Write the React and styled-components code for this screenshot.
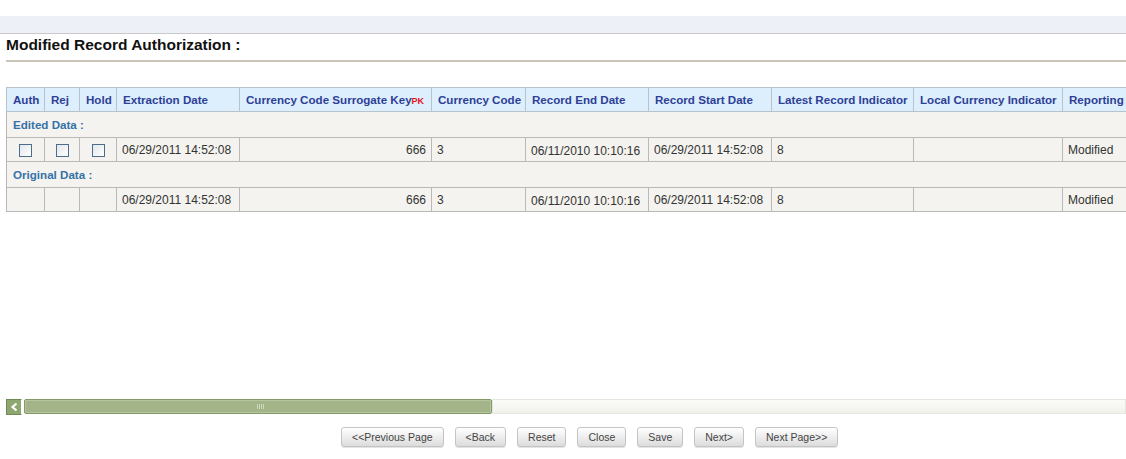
import React from 'react';
import styled, { createGlobalStyle } from 'styled-components';

const GlobalStyle = createGlobalStyle`
  html, body {
    margin: 0;
    padding: 0;
    background: #fff;
    font-family: "Liberation Sans", Arial, sans-serif;
  }
`;

const columns = [
  { title: 'Auth', width: 38 },
  { title: 'Rej', width: 35 },
  { title: 'Hold', width: 37 },
  { title: 'Extraction Date', width: 123 },
  { title: 'Currency Code Surrogate Key', width: 192, pk: true },
  { title: 'Currency Code', width: 94 },
  { title: 'Record End Date', width: 123 },
  { title: 'Record Start Date', width: 123 },
  { title: 'Latest Record Indicator', width: 142 },
  { title: 'Local Currency Indicator', width: 149 },
  { title: 'Reporting Currency Indicator', width: 170 },
];

const record = {
  extraction: '06/29/2011 14:52:08',
  surrogate: '666',
  code: '3',
  endDate: '06/11/2010 10:10:16',
  startDate: '06/29/2011 14:52:08',
  latest: '8',
  local: '',
  reporting: 'Modified',
};

const buttons = ['<<Previous Page', '<Back', 'Reset', 'Close', 'Save', 'Next>', 'Next Page>>'];

const DataRow = ({ editable }) => (
  <tr>
    {[0, 1, 2].map((i) => (
      <CheckCell key={i}>{editable && <Check />}</CheckCell>
    ))}
    <Cell>{record.extraction}</Cell>
    <Cell $align="right">{record.surrogate}</Cell>
    <Cell>{record.code}</Cell>
    <Cell $drop>{record.endDate}</Cell>
    <Cell>{record.startDate}</Cell>
    <Cell>{record.latest}</Cell>
    <Cell>{record.local}</Cell>
    <Cell>{record.reporting}</Cell>
  </tr>
);

const App = () => {
  return (
    <>
      <GlobalStyle />
      <Page>
        <TopBand />
        <Title>Modified Record Authorization :</Title>
        <Rule />
        <TableViewport>
          <Grid>
            <colgroup>
              {columns.map((c) => (
                <col key={c.title} style={{ width: c.width }} />
              ))}
            </colgroup>
            <thead>
              <tr>
                {columns.map((c) => (
                  <HeadCell key={c.title}>
                    {c.title}
                    {c.pk && <Pk>PK</Pk>}
                  </HeadCell>
                ))}
              </tr>
            </thead>
            <tbody>
              <tr>
                <GroupCell colSpan={columns.length}>Edited Data :</GroupCell>
              </tr>
              <DataRow editable />
              <tr>
                <GroupCell colSpan={columns.length}>Original Data :</GroupCell>
              </tr>
              <DataRow />
            </tbody>
          </Grid>
        </TableViewport>
        <ScrollBar>
          <ArrowButton>
            <svg width="9" height="10" viewBox="0 0 9 10">
              <path d="M6.5 1.5 L2.5 5 L6.5 8.5" fill="none" stroke="#fff" strokeWidth="2.2" />
            </svg>
          </ArrowButton>
          <Thumb>
            <Grip />
          </Thumb>
          <Track />
        </ScrollBar>
        <ButtonBar>
          {buttons.map((b) => (
            <ActionButton key={b}>{b}</ActionButton>
          ))}
        </ButtonBar>
      </Page>
    </>
  );
};

export default App;

const Page = styled.div`
  width: 1126px;
  height: 459px;
  overflow: hidden;
`;

const TopBand = styled.div`
  margin-top: 16px;
  height: 17px;
  background: #eef0f8;
  border-bottom: 1px solid #c9c9c9;
`;

const Title = styled.h2`
  margin: 0;
  padding: 2px 6px 0;
  height: 24px;
  font-size: 15.5px;
  font-weight: bold;
  color: #111;
  line-height: 18px;
`;

const Rule = styled.div`
  margin-left: 6px;
  height: 2px;
  background: #cbc5b7;
`;

const TableViewport = styled.div`
  margin-top: 25px;
  height: 312px;
  padding-left: 6px;
  overflow: hidden;
`;

const Grid = styled.table`
  border-collapse: collapse;
  table-layout: fixed;
  width: 1216px;
  font-size: 12px;
`;

const HeadCell = styled.th`
  height: 23px;
  padding: 0 6px;
  background: #ddeefc;
  border: 1px solid #b9c3cc;
  color: #2e3f96;
  font-size: 11.6px;
  font-weight: bold;
  text-align: left;
  white-space: nowrap;
  overflow: hidden;
`;

const Pk = styled.span`
  color: #e8141c;
  font-size: 9px;
  font-weight: bold;
`;

const GroupCell = styled.td`
  height: 25px;
  padding: 0 6px;
  background: #f4f3ef;
  border: 1px solid #b9b9b9;
  color: #3572a8;
  font-size: 11.6px;
  font-weight: bold;
  text-align: left;
`;

const Cell = styled.td`
  height: 24px;
  padding: ${(p) => (p.$drop ? '2px 5px 0' : '0 5px')};
  box-sizing: border-box;
  background: #f4f3ef;
  border: 1px solid #b9b9b9;
  color: #333;
  text-align: ${(p) => p.$align || 'left'};
  white-space: nowrap;
  overflow: hidden;
`;

const CheckCell = styled(Cell)`
  text-align: center;
  padding: 0;
`;

const Check = styled.span`
  display: inline-block;
  vertical-align: middle;
  width: 11px;
  height: 11px;
  border: 1px solid #4d6d8c;
  background: linear-gradient(135deg, #e2e6ea, #ffffff);
`;

const ScrollBar = styled.div`
  display: flex;
  margin-left: 6px;
  height: 15px;
`;

const ArrowButton = styled.div`
  display: flex;
  align-items: center;
  justify-content: center;
  width: 14px;
  height: 14px;
  background: #8ea66f;
  border: 1px solid #6f8a55;
  border-right-color: #fff;
`;

const Thumb = styled.div`
  position: relative;
  margin-left: 2px;
  width: 466px;
  height: 13px;
  background: #a2b488;
  border: 1px solid #829a68;
  border-radius: 2px;
  box-shadow: inset 0 0 0 1px #b6c59f;
`;

const Grip = styled.div`
  position: absolute;
  left: 232px;
  top: 4px;
  width: 7px;
  height: 5px;
  background: repeating-linear-gradient(90deg, #cfd9c0 0 1px, transparent 1px 2px);
`;

const Track = styled.div`
  flex: 1;
  height: 13px;
  background: linear-gradient(#fbfbf9, #f1f1ec);
  border: 1px solid #e6e6e0;
`;

const ButtonBar = styled.div`
  display: flex;
  gap: 11px;
  margin-top: 13px;
  padding-left: 341px;
`;

const ActionButton = styled.button`
  height: 20px;
  padding: 0 10px;
  font-family: "Liberation Sans", Arial, sans-serif;
  font-size: 10.5px;
  color: #444;
  background: linear-gradient(#ffffff, #dcdcdc);
  border: 1px solid #c4c4c4;
  border-radius: 3px;
  box-shadow: 0 1px 0 #e4e4e4;
  cursor: pointer;
`;
